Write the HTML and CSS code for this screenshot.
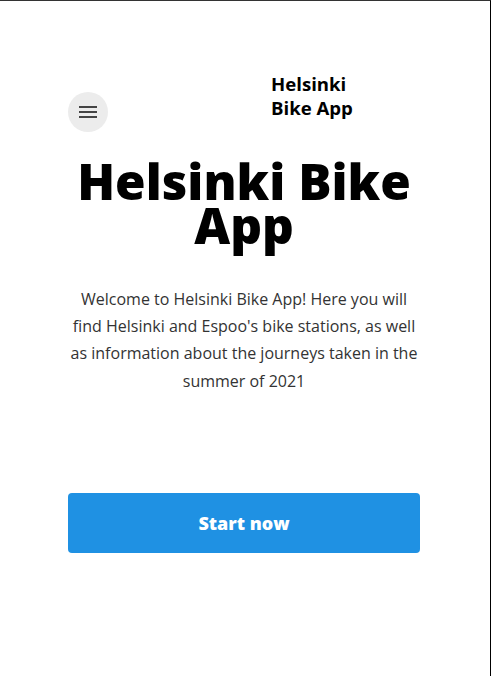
FILE: index.html
```html
<!DOCTYPE html>
<html lang="en">
<head>
<meta charset="utf-8">
<title>Helsinki Bike App</title>
<link rel="stylesheet" href="styles.css">
</head>
<body>
<div class="frame">
  <main class="page">
    <header class="topbar">
      <button class="menu-btn" aria-label="menu">
        <svg viewBox="0 0 24 24" width="24" height="24"><path d="M3 18h18v-2H3v2zm0-5h18v-2H3v2zm0-7v2h18V6H3z"/></svg>
      </button>
      <div class="brand">Helsinki Bike App</div>
    </header>
    <h1 class="hero-title">Helsinki Bike App</h1>
    <p class="hero-text">Welcome to Helsinki Bike App! Here you will find Helsinki and Espoo's bike stations, as well as information about the journeys taken in the summer of 2021</p>
    <button class="start-btn">Start now</button>
  </main>
</div>
</body>
</html>
```
FILE: styles.css
```css
html, body {
  margin: 0;
  padding: 0;
  background: #fff;
}
body {
  font-family: "Open Sans", "Liberation Sans", sans-serif;
}
.frame {
  box-sizing: border-box;
  width: 491px;
  height: 676px;
  border-top: 1px solid #333;
  border-right: 1px solid #000;
  overflow: hidden;
}
.page {
  width: 352px;
  margin-left: 68px;
  display: flex;
  flex-direction: column;
}
.topbar {
  display: flex;
  align-items: flex-start;
  padding-top: 71px;
  height: 60px;
}
.menu-btn {
  width: 40px;
  height: 40px;
  margin-top: 20px;
  border: none;
  border-radius: 50%;
  background: #ececec;
  padding: 0;
  display: flex;
  align-items: center;
  justify-content: center;
}
.menu-btn svg {
  fill: #444;
}
.brand {
  margin-left: 163px;
  width: 95px;
  font-size: 18.6px;
  line-height: 24px;
  font-weight: 700;
  color: #000;
}
.hero-title {
  margin: 27px 0 0;
  font-size: 49.5px;
  line-height: 44px;
  font-weight: 800;
  text-align: center;
  color: #000;
}
.hero-text {
  margin: 39px 0 0;
  font-size: 16px;
  line-height: 27.2px;
  text-align: center;
  color: #333;
}
.start-btn {
  margin-top: 98px;
  height: 60px;
  width: 100%;
  border: none;
  border-radius: 4px;
  background: #1f91e3;
  color: #fff;
  font-family: "Open Sans", "Liberation Sans", sans-serif;
  font-size: 18px;
  font-weight: 800;
  padding: 0;
}
```
